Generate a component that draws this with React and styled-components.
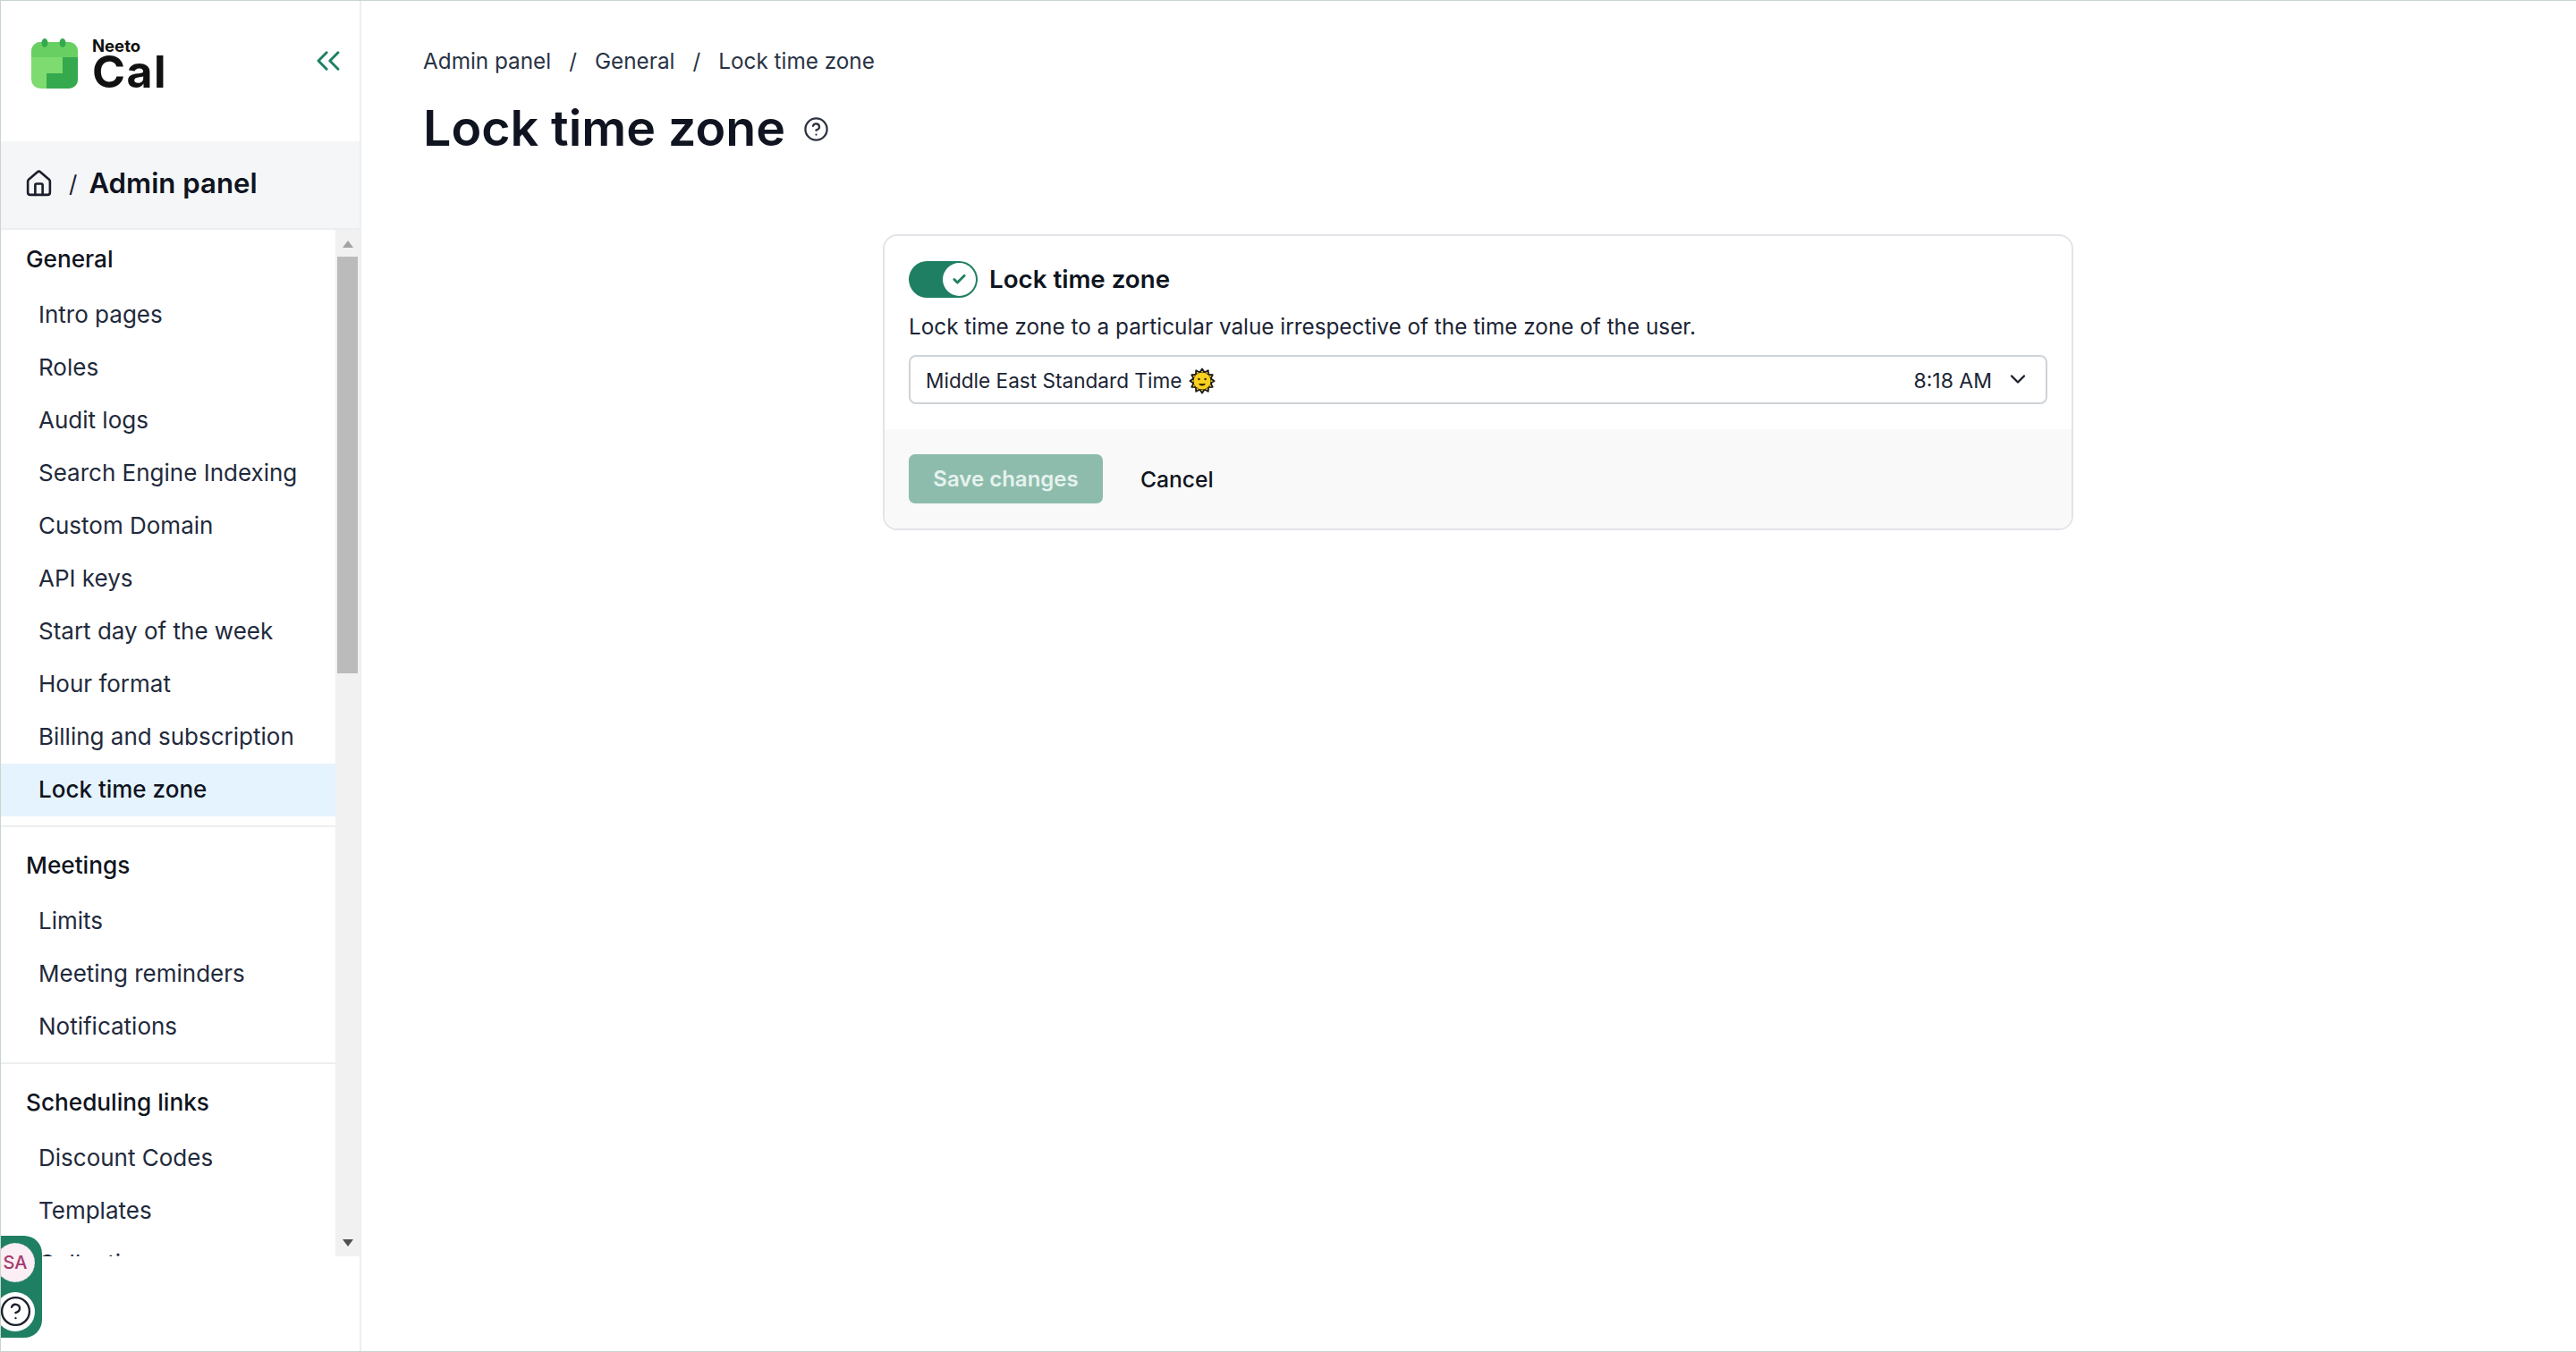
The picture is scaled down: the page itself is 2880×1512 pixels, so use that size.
import React from 'react';
import styled, { createGlobalStyle } from 'styled-components';
import { ChevronDown, ChevronsLeft, CircleHelp, Check, Home } from 'lucide-react';

const GENERAL = [
  'Intro pages',
  'Roles',
  'Audit logs',
  'Search Engine Indexing',
  'Custom Domain',
  'API keys',
  'Start day of the week',
  'Hour format',
  'Billing and subscription',
  'Lock time zone',
];
const MEETINGS = ['Limits', 'Meeting reminders', 'Notifications'];
const SCHEDULING = ['Discount Codes', 'Templates', 'Collections'];

// Логотип: зелёный календарь
function CalendarMark() {
  return (
    <svg width="52" height="56" viewBox="0 0 52 56">
      <rect x="0" y="4" width="52" height="52" rx="10" fill="#7edb6f" />
      <path d="M0 21V14A10 10 0 0 1 10 4h32a10 10 0 0 1 10 10v7z" fill="#68d062" />
      <path d="M52 21v25a10 10 0 0 1-10 10H17V39h18V21z" fill="#35a94d" />
      <ellipse cx="15" cy="5" rx="3.5" ry="5" fill="#35a94d" />
      <ellipse cx="35" cy="5" rx="3.5" ry="5" fill="#35a94d" />
    </svg>
  );
}

// Эмодзи солнца рисуем сами, цветного шрифта нет
function SunFace() {
  const rays = Array.from({ length: 12 }, (_, i) => i * 30);
  return (
    <svg width="30" height="30" viewBox="0 0 30 30">
      {rays.map(angle => (
        <path
          key={angle}
          d="M12 6L15 1.4 18 6z"
          fill="#f5c518"
          stroke="#1c1c1c"
          strokeWidth="1.8"
          strokeLinejoin="round"
          transform={`rotate(${angle} 15 15)`}
        />
      ))}
      <circle cx="15" cy="15" r="9.6" fill="#f9d020" />
      <circle cx="11.4" cy="13" r="1.3" fill="#3a2c00" />
      <circle cx="18.6" cy="13" r="1.3" fill="#3a2c00" />
      <path d="M11 18h8q-1 2.6-4 2.6T11 18z" fill="#3a2c00" />
    </svg>
  );
}

function NavSection({ title, items, active, last }) {
  return (
    <Section $last={last}>
      <SectionTitle>{title}</SectionTitle>
      {items.map(item => (
        <NavItem key={item} $active={item === active}>{item}</NavItem>
      ))}
    </Section>
  );
}

export default function App() {
  return (
    <Page>
      <GlobalStyle />
      <Sidebar>
        <LogoBar>
          <Logo>
            <CalendarMark />
            <LogoText>
              <LogoSmall>Neeto</LogoSmall>
              <LogoBig>Cal</LogoBig>
            </LogoText>
          </Logo>
          <CollapseIcon>
            <ChevronsLeft size={44} strokeWidth={1.6} color="#1f7f63" />
          </CollapseIcon>
        </LogoBar>
        <PanelHeader>
          <Home size={33} strokeWidth={1.9} color="#1b1f2b" />
          <Slash>/</Slash>
          <PanelTitle>Admin panel</PanelTitle>
        </PanelHeader>
        <ScrollArea>
          <NavList>
            <NavSection title="General" items={GENERAL} active="Lock time zone" />
            <NavSection title="Meetings" items={MEETINGS} />
            <NavSection title="Scheduling links" items={SCHEDULING} last />
          </NavList>
          <ScrollTrack>
            <ArrowUp />
            <Thumb />
            <ArrowDown />
          </ScrollTrack>
        </ScrollArea>
        <HelpWidget>
          <Avatar>SA</Avatar>
          <HelpButton>
            <CircleHelp size={37} strokeWidth={1.5} color="#1b1f2b" />
          </HelpButton>
        </HelpWidget>
      </Sidebar>
      <Main>
        <Crumbs>
          <span>Admin panel</span>
          <CrumbSlash>/</CrumbSlash>
          <span>General</span>
          <CrumbSlash>/</CrumbSlash>
          <span>Lock time zone</span>
        </Crumbs>
        <TitleRow>
          <Title>Lock time zone</Title>
          <TitleHelp>
            <CircleHelp size={29} strokeWidth={1.9} color="#2c3340" />
          </TitleHelp>
        </TitleRow>
        <CardWrap>
          <Card>
            <CardBody>
              <ToggleRow>
                <Toggle>
                  <Knob>
                    <Check size={17} strokeWidth={4} color="#1f7f63" />
                  </Knob>
                </Toggle>
                <ToggleLabel>Lock time zone</ToggleLabel>
              </ToggleRow>
              <Description>
                Lock time zone to a particular value irrespective of the time zone of the user.
              </Description>
              <Select>
                <ZoneName>
                  Middle East Standard Time
                  <SunFace />
                </ZoneName>
                <ZoneTime>
                  8:18 AM
                  <SelectCaret>
                    <ChevronDown size={28} strokeWidth={2} color="#1b1f2b" />
                  </SelectCaret>
                </ZoneTime>
              </Select>
            </CardBody>
            <CardFooter>
              <SaveButton>Save changes</SaveButton>
              <CancelButton>Cancel</CancelButton>
            </CardFooter>
          </Card>
        </CardWrap>
      </Main>
    </Page>
  );
}

// --- Стили ---
const GlobalStyle = createGlobalStyle`
  html, body {
    margin: 0;
    padding: 0;
    background: #fff;
  }
  * {
    box-sizing: border-box;
  }
`;

const Page = styled.div`
  position: relative;
  display: flex;
  width: 2880px;
  height: 1512px;
  overflow: hidden;
  border-top: 1px solid #c9d6cc;
  border-left: 1px solid #c9d6cc;
  border-bottom: 1px solid #c9d6cc;
  font-family: Inter, "Liberation Sans", sans-serif;
  font-size: 26px;
  color: #1b1f2b;
`;

const Sidebar = styled.aside`
  display: flex;
  flex-direction: column;
  flex: 0 0 403px;
  border-right: 2px solid #eceef0;
`;

const LogoBar = styled.div`
  display: flex;
  align-items: center;
  justify-content: space-between;
  height: 157px;
  padding: 0 13px 18px 34px;
`;

const Logo = styled.div`
  display: flex;
  align-items: center;
  gap: 16px;
`;

const LogoText = styled.div`
  display: flex;
  flex-direction: column;
  gap: 2px;
  color: #111;
`;

const LogoSmall = styled.span`
  font-size: 18.5px;
  font-weight: 700;
  line-height: 16px;
`;

const LogoBig = styled.span`
  font-size: 50px;
  font-weight: 700;
  line-height: 38px;
  letter-spacing: 1.5px;
`;

const CollapseIcon = styled.div`
  display: flex;
  margin-bottom: 5px;
`;

const PanelHeader = styled.div`
  display: flex;
  align-items: center;
  height: 99px;
  padding: 0 0 3px 26px;
  background: #f5f6f8;
  border-bottom: 2px solid #eceef0;
`;

const Slash = styled.span`
  margin: 0 13px 0 17px;
  font-size: 26px;
`;

const PanelTitle = styled.span`
  font-size: 31.2px;
  font-weight: 600;
  color: #0f1420;
`;

const ScrollArea = styled.div`
  display: flex;
  height: 1148px;
  overflow: hidden;
`;

const NavList = styled.nav`
  flex: 1;
  min-width: 0;
  padding-top: 2px;
`;

const Section = styled.div`
  padding-bottom: ${({ $last }) => ($last ? '0' : '10px')};
  margin-bottom: ${({ $last }) => ($last ? '0' : '12px')};
  border-bottom: ${({ $last }) => ($last ? 'none' : '2px solid #eceef0')};
`;

const SectionTitle = styled.div`
  display: flex;
  align-items: center;
  height: 64px;
  padding: 0 0 4px 28px;
  font-size: 26.2px;
  font-weight: 500;
  color: #0f1420;
`;

const NavItem = styled.div`
  display: flex;
  align-items: center;
  height: 59px;
  padding: 0 0 3px 42px;
  font-weight: ${({ $active }) => ($active ? 500 : 400)};
  background: ${({ $active }) => ($active ? '#e5f3fe' : 'transparent')};
  color: ${({ $active }) => ($active ? '#0f1420' : '#1f2a3c')};
`;

const ScrollTrack = styled.div`
  display: flex;
  flex-direction: column;
  align-items: center;
  flex: 0 0 27px;
  background: #f1f1f1;
`;

const ArrowUp = styled.div`
  margin: 12px 0 10px;
  border-left: 6.5px solid transparent;
  border-right: 6.5px solid transparent;
  border-bottom: 8px solid #a3a3a3;
`;

const Thumb = styled.div`
  width: 23px;
  height: 466px;
  background: #bbb;
`;

const ArrowDown = styled.div`
  margin: auto 0 11px;
  border-left: 6.5px solid transparent;
  border-right: 6.5px solid transparent;
  border-top: 8px solid #505050;
`;

const HelpWidget = styled.div`
  position: absolute;
  left: -1px;
  top: 1381px;
  display: flex;
  flex-direction: column;
  gap: 11px;
  justify-content: center;
  align-items: flex-end;
  width: 47px;
  height: 114px;
  padding-right: 8px;
  background: #1f7f63;
  border-radius: 0 20px 20px 0;
`;

const Avatar = styled.div`
  display: flex;
  align-items: center;
  justify-content: center;
  flex: 0 0 44px;
  width: 44px;
  height: 44px;
  font-size: 20px;
  font-weight: 500;
  color: #a33a6e;
  background: #fbeef4;
  border: 1px dashed #cfd6d6;
  border-radius: 50%;
`;

const HelpButton = styled.div`
  display: flex;
  align-items: center;
  justify-content: center;
  flex: 0 0 44px;
  width: 44px;
  height: 44px;
  background: #fff;
  border-radius: 50%;
`;

const Main = styled.main`
  flex: 1;
  min-width: 0;
  padding: 51px 68px 0 69px;
`;

const Crumbs = styled.div`
  display: flex;
  align-items: center;
  height: 32px;
  font-size: 24.3px;
  color: #2a3344;
`;

const CrumbSlash = styled.span`
  margin: 0 20px;
`;

const TitleRow = styled.div`
  display: flex;
  align-items: center;
  gap: 20px;
  margin-top: 28px;
  height: 60px;
`;

const Title = styled.h1`
  margin: 0;
  font-size: 55.5px;
  font-weight: 600;
  color: #0f1420;
`;

const TitleHelp = styled.div`
  display: flex;
  margin-top: 5px;
`;

const CardWrap = styled.div`
  display: flex;
  margin-top: 90px;
  padding-left: 514px;
`;

const Card = styled.section`
  display: flex;
  flex-direction: column;
  width: 1331px;
  height: 331px;
  overflow: hidden;
  background: #fff;
  border: 2px solid #e2e4e8;
  border-radius: 16px;
`;

const CardBody = styled.div`
  flex: 0 0 216px;
  padding: 27px 27px 0;
`;

const ToggleRow = styled.div`
  display: flex;
  align-items: center;
  gap: 13px;
  height: 42px;
`;

const Toggle = styled.div`
  display: flex;
  align-items: center;
  justify-content: flex-end;
  width: 77px;
  height: 41px;
  padding-right: 2px;
  background: #1f7f63;
  border-radius: 21px;
`;

const Knob = styled.div`
  display: flex;
  align-items: center;
  justify-content: center;
  width: 37px;
  height: 37px;
  background: #fff;
  border-radius: 50%;
`;

const ToggleLabel = styled.span`
  font-size: 27.7px;
  font-weight: 600;
  color: #0f1420;
`;

const Description = styled.p`
  margin: 16px 0 0;
  font-size: 24.3px;
  line-height: 32px;
  color: #1b2434;
`;

const Select = styled.div`
  display: flex;
  align-items: center;
  justify-content: space-between;
  height: 55px;
  margin-top: 16px;
  padding: 2px 17px 0;
  border: 2px solid #cfd3d8;
  border-radius: 8px;
`;

const ZoneName = styled.span`
  display: flex;
  align-items: center;
  gap: 8px;
  font-size: 22.6px;
  color: #1b2434;
`;

const ZoneTime = styled.span`
  display: flex;
  align-items: center;
  gap: 15px;
  font-size: 23px;
  color: #1b2434;
`;

const SelectCaret = styled.span`
  display: flex;
  margin-bottom: 3px;
`;

const CardFooter = styled.div`
  display: flex;
  align-items: center;
  flex: 1;
  gap: 42px;
  padding: 0 27px;
  background: #f9f9f9;
`;

const SaveButton = styled.div`
  display: flex;
  align-items: center;
  justify-content: center;
  width: 217px;
  height: 55px;
  font-size: 24px;
  font-weight: 600;
  color: #e6f2ee;
  background: #8dbcac;
  border-radius: 7px;
`;

const CancelButton = styled.div`
  font-size: 24.6px;
  font-weight: 500;
  color: #0f1420;
`;
